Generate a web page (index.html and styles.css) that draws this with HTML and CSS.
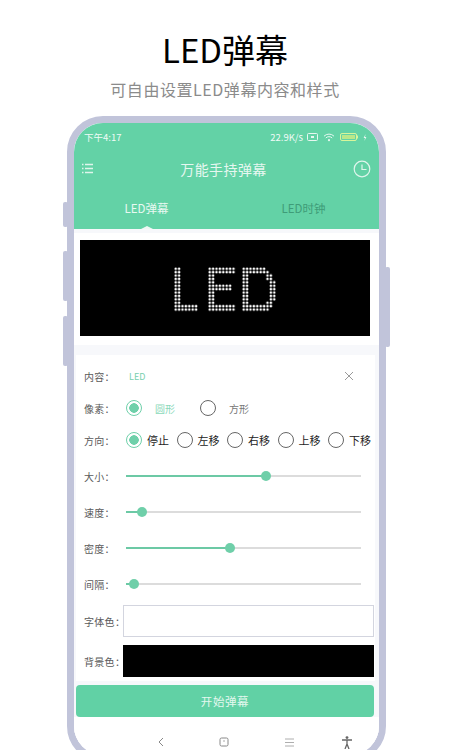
FILE: index.html
```html
<!DOCTYPE html>
<html lang="zh-CN">
<head>
<meta charset="utf-8">
<title>LED弹幕</title>
<link rel="stylesheet" href="styles.css">
</head>
<body>
<main class="page">
  <header class="intro">
    <h1 class="intro-title">LED弹幕</h1>
    <p class="intro-sub">可自由设置LED弹幕内容和样式</p>
  </header>
  <div class="phone">
    <span class="side side-l1"></span>
    <span class="side side-l2"></span>
    <span class="side side-l3"></span>
    <span class="side side-r"></span>
    <div class="screen">
      <div class="green">
        <div class="status">
          <span class="status-time">下午4:17</span>
          <div class="status-right">
            <span class="status-speed">22.9K/s</span>
            <svg class="st-icon" width="11" height="8" viewBox="0 0 11 8"><rect x=".5" y=".5" width="10" height="7" rx="1" fill="none" stroke="#e6f7f0"/><rect x="4" y="3" width="3" height="2" fill="#e6f7f0"/></svg>
            <svg class="st-icon" width="12" height="9" viewBox="0 0 12 9"><path d="M1 3.2a7 7 0 0 1 10 0M2.8 5a4.5 4.5 0 0 1 6.4 0" fill="none" stroke="#e6f7f0"/><circle cx="6" cy="7.2" r="1.1" fill="#e6f7f0"/></svg>
            <svg class="st-icon" width="18" height="8" viewBox="0 0 18 8"><rect x=".5" y=".5" width="16" height="7" rx="1.5" fill="none" stroke="#d8f59a"/><rect x="2" y="2" width="13" height="4" fill="#b9e88a"/><rect x="17" y="2.5" width="1" height="3" fill="#d8f59a"/></svg>
            <svg class="st-icon" width="4" height="7" viewBox="0 0 4 7"><path d="M2.6 0 .6 4h1.4L1.4 7l2-4H2z" fill="#e6f7f0"/></svg>
          </div>
        </div>
        <div class="appbar">
          <svg width="13" height="11" viewBox="0 0 13 11"><path d="M1 1.5h1.5M4 1.5h8M1 5.500h1.500M4 5.500h8M1 9.500h1.500M4 9.500h8" stroke="#dff5ec" stroke-width="1.300" fill="none"/></svg>
          <span class="appbar-title">万能手持弹幕</span>
          <svg width="18" height="18" viewBox="0 0 18 18"><circle cx="9" cy="9" r="7.800" fill="none" stroke="#dff5ec" stroke-width="1.200"/><path d="M9 4.500V9.500H13.500" fill="none" stroke="#dff5ec" stroke-width="1.200"/></svg>
        </div>
        <div class="tabs">
          <span class="tab tab-on">LED弹幕</span>
          <span class="tab">LED时钟</span>
        </div>
      </div>
      <section class="card-led">
        <div class="led">
          <svg width="290" height="96" viewBox="0 0 290 96">
            <defs>
              <pattern id="dots" width="3.400" height="3.400" patternUnits="userSpaceOnUse" x="94" y="27">
                <circle cx="1.700" cy="1.700" r="1.300" fill="#fff"/>
              </pattern>
            </defs>
            <g fill="url(#dots)">
              <path d="M94 27h6.800v37.400h17v6.800H94z"/>
              <path d="M128 27h27.200v6.800h-20.400v10.200h17v6.800h-17v13.600h20.400v6.800H128z"/>
              <path d="M162 27h23.800v3.400h3.400v3.400h3.400v6.800h3.400v20.400h-3.400v6.800h-3.400v3.400h-27.200zM168.800 33.800v30.600h17v-3.400h3.400V40.600h-3.400v-6.800z"/>
            </g>
          </svg>
        </div>
      </section>
      <form class="panel">
        <div class="row row-text">
          <span class="label">内容：</span>
          <span class="value">LED</span>
          <svg class="clear" width="10" height="10" viewBox="0 0 10 10"><path d="M1 1l8 8M9 1l-8 8" stroke="#9a9a9a" stroke-width="1"/></svg>
        </div>
        <div class="row row-text">
          <span class="label">像素：</span>
          <div class="opts">
            <span class="opt opt-shape"><i class="radio radio-on"></i><span class="opt-green">圆形</span></span>
            <span class="opt opt-shape"><i class="radio"></i><span class="opt-gray">方形</span></span>
          </div>
        </div>
        <div class="row row-text">
          <span class="label">方向：</span>
          <div class="opts">
            <span class="opt opt-dir"><i class="radio radio-on"></i>停止</span>
            <span class="opt opt-dir"><i class="radio"></i>左移</span>
            <span class="opt opt-dir"><i class="radio"></i>右移</span>
            <span class="opt opt-dir"><i class="radio"></i>上移</span>
            <span class="opt opt-dir"><i class="radio"></i>下移</span>
          </div>
        </div>
        <div class="sliders">
          <div class="row row-slider"><span class="label">大小：</span><div class="track"><div class="fill" style="width:59.6%"><i class="thumb"></i></div></div></div>
          <div class="row row-slider"><span class="label">速度：</span><div class="track"><div class="fill" style="width:6.800%"><i class="thumb"></i></div></div></div>
          <div class="row row-slider"><span class="label">密度：</span><div class="track"><div class="fill" style="width:44.300%"><i class="thumb"></i></div></div></div>
          <div class="row row-slider"><span class="label">间隔：</span><div class="track"><div class="fill" style="width:3.400%"><i class="thumb"></i></div></div></div>
        </div>
        <div class="row row-color"><span class="label label-color">字体色：</span><div class="swatch swatch-white"></div></div>
        <div class="row row-color"><span class="label label-color">背景色：</span><div class="swatch swatch-black"></div></div>
      </form>
      <button class="start" type="button">开始弹幕</button>
      <nav class="nav">
        <svg class="nav-back" width="8" height="10" viewBox="0 0 8 10"><path d="M6 1 2 5l4 4" fill="none" stroke="#888" stroke-width="1"/></svg>
        <svg class="nav-home" width="10" height="10" viewBox="0 0 10 10"><rect x="1" y="1" width="8" height="8" rx="1.500" fill="none" stroke="#888"/><path d="M5 3v2" stroke="#aaa"/></svg>
        <svg class="nav-menu" width="11" height="9" viewBox="0 0 11 9"><path d="M1 1h9M1 4.500h9M1 8h9" stroke="#999" stroke-width=".8"/></svg>
        <svg width="12" height="13" viewBox="0 0 12 13"><circle cx="6" cy="1.600" r="1.400" fill="#666"/><path d="M1 4h10M6 4v4M6 8l-2 5M6 8l2 5" fill="none" stroke="#666" stroke-width="1.300"/></svg>
      </nav>
    </div>
  </div>
</main>
</body>
</html>
```

FILE: styles.css
```css
* { box-sizing: border-box; }
html, body { margin: 0; height: 750px; overflow: hidden; background: #fff; }
body { font-family: "Noto Sans CJK SC", "Noto Sans", sans-serif; }
.page { display: flex; flex-direction: column; align-items: center; }

.intro { height: 116px; text-align: center; padding-top: 26px; }
.intro-title { margin: 0; font-size: 33px; line-height: 46px; font-weight: 400; color: #000; }
.intro-sub { margin: 0; padding-top: 5px; font-size: 16px; line-height: 24px; letter-spacing: .55px; color: #8b8b8b; }

.phone { position: relative; width: 319px; margin-left: 3px; height: 646px; border: 7px solid #c1c4da; border-radius: 36px; background: #fff; }
.side { position: absolute; background: #c1c4da; width: 5px; border-radius: 2px; }
.side-l1 { left: -11px; top: 79px; height: 25px; }
.side-l2 { left: -11px; top: 128px; height: 50px; }
.side-l3 { left: -11px; top: 193px; height: 50px; }
.side-r { right: -11px; top: 144px; height: 80px; }

.screen { height: 100%; border-radius: 29px; overflow: hidden; display: flex; flex-direction: column; background: #f7f8fb; }
.green { background: #63d2a6; height: 106px; flex: none; color: #fff; }
.status { height: 28px; padding: 0 12px 0 10px; display: flex; justify-content: space-between; align-items: center; color: #f0fbf6; }
.status-time { font-size: 9.500px; }
.status-speed { font-size: 9.500px; margin-right: -1px; }
.status-right { display: flex; align-items: center; gap: 5px; }
.st-icon { display: block; }
.appbar { height: 35px; padding: 0 8px 0 7px; display: flex; justify-content: space-between; align-items: center; }
.appbar-title { font-size: 14px; letter-spacing: .4px; color: #e6f7f0; }
.tabs { height: 43px; display: flex; gap: 12px; padding-right: 3px; }
.tab { flex: 1; text-align: center; line-height: 44px; font-size: 11.500px; color: #3f9c78; position: relative; }
.tab-on { color: #e9f9f2; }
.tab-on::after { content: ""; position: absolute; left: 50%; bottom: 0; margin-left: -6px; border-style: solid; border-color: transparent transparent #eef8f4; border-width: 0 6px 3px; }

.card-led { margin: 4px 0 0; padding: 7px 9px 9px 6px; background: #fff; flex: none; }
.led { height: 96px; width: 290px; background: #000; }
.led svg { display: block; }

.panel { margin: 10px 4px 0 2px; padding: 5px 0 0 8px; background: #fff; height: 326px; flex: none; display: flex; flex-direction: column; }
.row { display: flex; align-items: center; flex: none; }
.row-text { height: 32px; }
.sliders { margin-top: 2px; flex: none; }
.row-slider { height: 36px; }
.row-color { height: 32px; }
.sliders + .row-color { margin-top: 3px; }
.row-color + .row-color { margin-top: 8px; }
.label { width: 42px; flex: none; font-size: 10px; color: #5a5a5a; letter-spacing: .3px; white-space: nowrap; }
.label-color { width: 39px; }
.value { flex: 1; padding-left: 3px; font-size: 9px; color: #79cfae; }
.clear { margin-right: 21px; }
.opts { display: flex; }
.opt { display: flex; align-items: center; font-size: 10px; }
.opt-dir { width: 50.500px; color: #222; gap: 5px; font-size: 11px; }
.opt-shape { gap: 13px; width: 74px; }
.opt-green { color: #8bd9ba; }
.opt-gray { color: #777; }
.radio { width: 16px; height: 16px; flex: none; border-radius: 50%; border: 1.500px solid #666; background: #fff; display: block; }
.radio-on { border-color: #6fd0aa; background: radial-gradient(circle, #6fd0aa 0 4.500px, #fff 5px); }

.track { width: 235px; height: 2px; background: #dcdcdc; }
.fill { height: 2px; background: #6cc9a5; position: relative; }
.thumb { position: absolute; right: -5px; top: -4px; width: 10px; height: 10px; border-radius: 50%; background: #6fcfa9; display: block; }

.swatch { width: 251px; height: 32px; }
.swatch-white { background: #fff; border: 1px solid #d3d5df; }
.swatch-black { background: #000; }

.start { margin: 4px 0 0 2px; width: 298px; height: 32px; flex: none; border: 0; border-radius: 4px; background: #61d1a5; color: #e4f8ef; font: 400 11.500px "Noto Sans CJK SC", sans-serif; letter-spacing: .6px; }
.nav { flex: 1; background: #fff; display: flex; align-items: center; padding: 12px 0 0 83px; }
.nav-back { margin-right: 54px; }
.nav-home { margin-right: 55px; }
.nav-menu { margin-right: 46px; }
```
